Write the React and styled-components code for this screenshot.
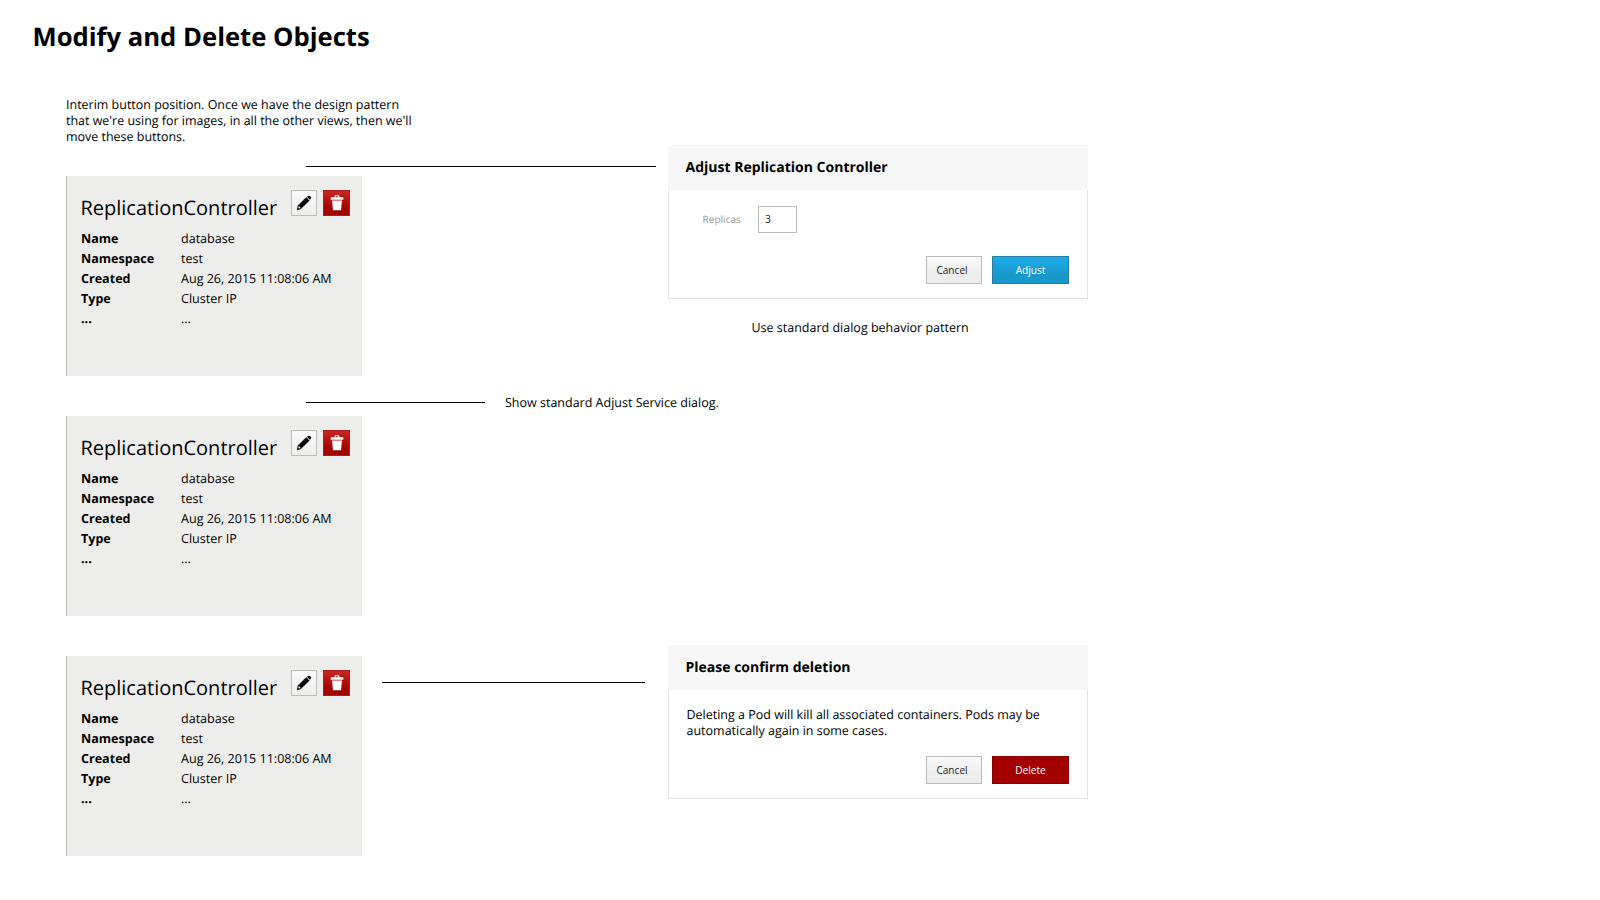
import React from "react";
import styled, { createGlobalStyle, css } from "styled-components";

const GlobalStyle = createGlobalStyle`
  * { box-sizing: border-box; }
  body {
    margin: 0;
    background: #fff;
    color: #000;
    font-family: "Open Sans", "Liberation Sans", sans-serif;
    text-rendering: geometricPrecision;
  }
  h1, h2, h3, p, dl, dt, dd { margin: 0; }
`;

const Page = styled.main`
  width: 1600px;
  height: 900px;
  overflow: hidden;
`;

const PageTitle = styled.h1`
  height: 97px;
  padding: 19px 0 0 32.5px;
  font-size: 25.65px;
  line-height: 36px;
  font-weight: 700;
  white-space: nowrap;
`;

const Section = styled.section`
  display: grid;
  grid-template-columns: 296px 306px 420px;
  height: ${(p) => p.$height}px;
  padding-left: 66px;
  align-items: start;
`;

const Side = styled.div`
  grid-area: 1 / 1;
  padding-top: ${(p) => p.$top}px;
`;

const DialogColumn = styled.div`
  grid-area: 1 / 3;
  padding-top: ${(p) => p.$top}px;
`;

const Note = styled.p`
  font-size: 12.5px;
  line-height: 15.9px;
  white-space: nowrap;
`;

const IntroNote = styled(Note)`
  height: 79px;
  font-size: 12.47px;
`;

const DialogNote = styled(Note)`
  padding: 21px 0 0 83.5px;
`;

const Callout = styled.div`
  grid-area: 1 / 1 / 2 / 4;
  display: flex;
  align-items: center;
  gap: 20px;
  height: 16px;
  margin: ${(p) => p.$top}px 0 0 ${(p) => p.$left}px;
`;

const CalloutText = styled(Note)`
  padding-top: 2px;
`;

const Connector = styled.span`
  width: ${(p) => p.$length}px;
  height: 1px;
  background: #000;
`;

const Card = styled.article`
  width: 296px;
  height: 200px;
  padding: 14px 12px 0 14px;
  border-left: 1px solid #bbb;
  background: #ededec;
`;

const CardHeader = styled.header`
  display: flex;
  justify-content: space-between;
  height: 39px;
`;

const CardTitle = styled.h2`
  margin-left: -0.6px;
  padding-top: 4px;
  font-size: 20px;
  line-height: 27px;
  font-weight: 400;
`;

const Actions = styled.div`
  display: flex;
  gap: 6px;
`;

const IconButton = styled.button`
  display: flex;
  align-items: center;
  justify-content: center;
  width: ${(p) => (p.$danger ? 27 : 26)}px;
  height: 26px;
  padding: 0;
  border: 1px solid ${(p) => (p.$danger ? "#a81e1e" : "#bbb")};
  background: ${(p) =>
    p.$danger
      ? "linear-gradient(#c92626, #a30000 75%)"
      : "linear-gradient(#fafafa, #ededed)"};

  svg { display: block; width: 24px; height: 24px; }
`;

const Details = styled.dl`
  display: grid;
  grid-template-columns: 100px 1fr;
  grid-auto-rows: 20px;
  font-size: 12.55px;
  line-height: 20px;
`;

const Term = styled.dt`
  font-weight: 700;
`;

const Value = styled.dd`
  white-space: nowrap;
`;

const DialogBox = styled.section`
  display: flex;
  flex-direction: column;
  width: 420px;
  height: 154px;
`;

const DialogTitle = styled.h3`
  height: 45px;
  padding-left: 17.5px;
  background: #f7f7f7;
  font-size: 14px;
  line-height: 45px;
  font-weight: 700;
`;

const DialogBody = styled.div`
  display: flex;
  flex: 1;
  flex-direction: column;
  justify-content: space-between;
  padding: 16px 18px 14px 17px;
  border: 1px solid #e2e2e2;
  border-top: 0;
`;

const DialogText = styled(Note)`
  padding: 1px 0 0 0.5px;
`;

const Field = styled.label`
  display: flex;
  align-items: center;
  padding-left: 16.5px;
  color: #999;
  font-size: 10.1px;
`;

const FieldLabel = styled.span`
  width: 55.5px;
  padding-bottom: 2px;
`;

const NumberInput = styled.input`
  width: 39px;
  height: 27px;
  padding: 0 0 2px 6px;
  border: 1px solid #bbb;
  outline: 0;
  color: #222;
  font: 10.4px "Open Sans", sans-serif;
`;

const ButtonRow = styled.div`
  display: flex;
  justify-content: flex-end;
  gap: 10px;
`;

const variants = {
  plain: css`
    width: 56px;
    padding-right: 4px;
    border-color: #bbb;
    background: linear-gradient(#fafafa, #ededed 60%);
    color: #222;
  `,
  primary: css`
    width: 77px;
    border-color: #267da1;
    background: linear-gradient(#1cace8, #1998cc 70%);
    color: #fff;
  `,
  danger: css`
    width: 77px;
    border-color: #8b0000;
    background: #a30000;
    color: #fff;
  `,
};

const Button = styled.button`
  height: 28px;
  padding: 0 0 1px;
  border: 1px solid;
  font: 10.1px "Open Sans", sans-serif;
  ${(p) => variants[p.$variant]}
`;

const PencilIcon = () => (
  <svg viewBox="0 0 24 24">
    <path d="M15 5.9l.9-.8q1.1-.9 2.1 0l.7.7q.9 1 0 2.1l-.8.9z" />
    <path d="M14.2 6.5l3.1 3.1-8.5 8.1-3.6 1.2.8-4.2z" stroke="#000" strokeWidth=".5" />
    <path d="M6.9 15.1l1.9 1.9-1.6.6-.9-.9z" fill="#f4f4f4" />
  </svg>
);

const TrashIcon = () => (
  <svg viewBox="0 0 24 24" fill="#fff">
    <path d="M5.7 6.2h4V5q0-.8.8-.8h3q.8 0 .8.8v1.2h4v2.5H5.7zM11 5.2v1h2v-1z" fillRule="evenodd" />
    <path d="M7 9.5h10L16 19.3H8z" />
  </svg>
);

const details = [
  ["Name", "database"],
  ["Namespace", "test"],
  ["Created", "Aug 26, 2015 11:08:06 AM"],
  ["Type", "Cluster IP"],
  ["...", "..."],
];

const ControllerCard = () => (
  <Card>
    <CardHeader>
      <CardTitle>ReplicationController</CardTitle>
      <Actions>
        <IconButton aria-label="Edit"><PencilIcon /></IconButton>
        <IconButton $danger aria-label="Delete"><TrashIcon /></IconButton>
      </Actions>
    </CardHeader>
    <Details>
      {details.map(([term, value]) => (
        <React.Fragment key={term}>
          <Term>{term}</Term>
          <Value>{value}</Value>
        </React.Fragment>
      ))}
    </Details>
  </Card>
);

const Dialog = ({ title, action, variant, children }) => (
  <DialogBox>
    <DialogTitle>{title}</DialogTitle>
    <DialogBody>
      {children}
      <ButtonRow>
        <Button $variant="plain">Cancel</Button>
        <Button $variant={variant}>{action}</Button>
      </ButtonRow>
    </DialogBody>
  </DialogBox>
);

export default function App() {
  return (
    <Page>
      <GlobalStyle />
      <PageTitle>Modify and Delete Objects</PageTitle>
      <Section $height={288}>
        <Side $top={0}>
          <IntroNote>
            Interim button position. Once we have the design pattern<br />
            that we're using for images, in all the other views, then we'll<br />
            move these buttons.
          </IntroNote>
          <ControllerCard />
        </Side>
        <Callout $top={61} $left={240}>
          <Connector $length={350} />
        </Callout>
        <DialogColumn $top={48}>
          <Dialog title="Adjust Replication Controller" action="Adjust" variant="primary">
            <Field>
              <FieldLabel>Replicas</FieldLabel>
              <NumberInput defaultValue="3" />
            </Field>
          </Dialog>
          <DialogNote>Use standard dialog behavior pattern</DialogNote>
        </DialogColumn>
      </Section>
      <Section $height={260}>
        <Side $top={31}>
          <ControllerCard />
        </Side>
        <Callout $top={9} $left={240}>
          <Connector $length={179} />
          <CalloutText>Show standard Adjust Service dialog.</CalloutText>
        </Callout>
      </Section>
      <Section $height={255}>
        <Side $top={11}>
          <ControllerCard />
        </Side>
        <Callout $top={29} $left={316}>
          <Connector $length={263} />
        </Callout>
        <DialogColumn $top={0}>
          <Dialog title="Please confirm deletion" action="Delete" variant="danger">
            <DialogText>
              Deleting a Pod will kill all associated containers. Pods may be<br />
              automatically again in some cases.
            </DialogText>
          </Dialog>
        </DialogColumn>
      </Section>
    </Page>
  );
}
